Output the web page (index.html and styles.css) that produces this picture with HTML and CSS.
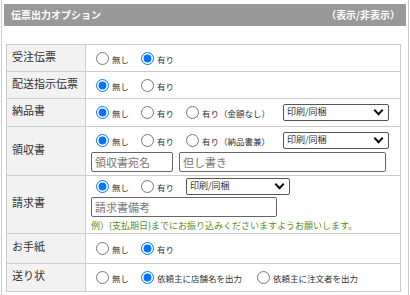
FILE: index.html
```html
<!DOCTYPE html>
<html lang="ja">
<head>
  <meta charset="UTF-8" />
  <title>伝票出力オプション</title>
  <link rel="stylesheet" href="styles.css">
</head>
<body>
  <div class="panel">
    <div class="panel-head">
      <span>伝票出力オプション</span>
      <span class="toggle">（表示/非表示）</span>
    </div>

    <table class="opts">
      <colgroup>
        <col class="col-label">
        <col>
      </colgroup>
      <tr class="r-27">
        <th>受注伝票</th>
        <td>
          <div class="line">
            <label class="opt"><input type="radio" name="juchu">無し</label>
            <label class="opt"><input type="radio" name="juchu" checked>有り</label>
          </div>
        </td>
      </tr>
      <tr class="r-27">
        <th>配送指示伝票</th>
        <td>
          <div class="line">
            <label class="opt"><input type="radio" name="haiso" checked>無し</label>
            <label class="opt"><input type="radio" name="haiso">有り</label>
          </div>
        </td>
      </tr>
      <tr class="r-28">
        <th>納品書</th>
        <td>
          <div class="line">
            <label class="opt"><input type="radio" name="nohin" checked>無し</label>
            <label class="opt"><input type="radio" name="nohin">有り</label>
            <label class="opt"><input type="radio" name="nohin">有り（金額なし）</label>
            <span class="select wide">印刷/同梱<i class="chev"></i></span>
          </div>
        </td>
      </tr>
      <tr class="r-49">
        <th>領収書</th>
        <td>
          <div class="line">
            <label class="opt"><input type="radio" name="ryoshu" checked>無し</label>
            <label class="opt"><input type="radio" name="ryoshu">有り</label>
            <label class="opt"><input type="radio" name="ryoshu">有り（納品書兼）</label>
            <span class="select wide">印刷/同梱<i class="chev"></i></span>
          </div>
          <div class="fields">
            <input class="text name" type="text" placeholder="領収書宛名">
            <input class="text memo" type="text" placeholder="但し書き">
          </div>
        </td>
      </tr>
      <tr class="r-58">
        <th>請求書</th>
        <td>
          <div class="line">
            <label class="opt"><input type="radio" name="seikyu" checked>無し</label>
            <label class="opt"><input type="radio" name="seikyu">有り</label>
            <span class="select">印刷/同梱<i class="chev"></i></span>
          </div>
          <div class="fields">
            <input class="text note" type="text" placeholder="請求書備考">
          </div>
          <p class="hint">例）{支払期日}までにお振り込みくださいますようお願いします。</p>
        </td>
      </tr>
      <tr class="r-30">
        <th>お手紙</th>
        <td>
          <div class="line">
            <label class="opt"><input type="radio" name="tegami">無し</label>
            <label class="opt"><input type="radio" name="tegami" checked>有り</label>
          </div>
        </td>
      </tr>
      <tr class="r-28">
        <th>送り状</th>
        <td>
          <div class="line">
            <label class="opt"><input type="radio" name="okuri">無し</label>
            <label class="opt wide-gap"><input type="radio" name="okuri" checked>依頼主に店舗名を出力</label>
            <label class="opt"><input type="radio" name="okuri">依頼主に注文者を出力</label>
          </div>
        </td>
      </tr>
    </table>
  </div>
</body>
</html>
```

FILE: styles.css
```css
:root {
  --line: #cccccc;
  --head: #999999;
  --label-bg: #f2f2f2;
  --text: #333333;
  --hint: #5a8f2e;
  --font: 'Noto Sans CJK JP', 'Noto Sans', sans-serif;
}

body {
  margin: 0;
  font-family: var(--font);
  color: var(--text);
  background: #ffffff;
  line-height: 1.2;
}

.panel {
  margin: 0 1px;
  height: 295px;
  box-sizing: border-box;
  border-left: 1px solid var(--line);
  border-right: 1px solid var(--line);
  padding: 4px 2px 0;
}

.panel-head {
  height: 22px;
  background: var(--head);
  color: #ffffff;
  font-size: 10px;
  font-weight: bold;
  display: flex;
  justify-content: space-between;
  align-items: center;
  padding: 0 6px 0 7px;
}

.opts {
  margin: 18px 0 0 2px;
  width: 395px;
  table-layout: fixed;
  border-collapse: collapse;
  font-size: 11px;
}

.col-label {
  width: 79px;
}

.opts th,
.opts td {
  border: 1px solid var(--line);
  padding: 0 5px;
  vertical-align: middle;
}

.opts th {
  background: var(--label-bg);
  font-weight: normal;
  text-align: left;
  padding-bottom: 3px;
}

.r-27 th { height: 23px; }
.r-28 th { height: 24px; }
.r-30 th { height: 26px; }
.r-49 th { height: 45px; }
.r-58 th { height: 54px; }

.line {
  display: flex;
  align-items: center;
  height: 20px;
}

.opt {
  display: flex;
  align-items: center;
  font-size: 8.5px;
  margin-right: 7px;
  white-space: nowrap;
  padding-top: 2px;
}

.opt.wide-gap {
  margin-right: 10px;
}

.opt input {
  width: 13px;
  height: 13px;
  margin: 0 3px 2px 5px;
}

.select {
  display: flex;
  align-items: center;
  justify-content: space-between;
  box-sizing: border-box;
  width: 104px;
  height: 17px;
  border: 1px solid #555555;
  border-radius: 2px;
  padding: 0 6px 0 3px;
  font-size: 9px;
  margin-left: 5px;
}

.select.wide {
  width: 106px;
  margin-left: 6px;
}

.chev {
  width: 5px;
  height: 5px;
  border-right: 2px solid #111111;
  border-bottom: 2px solid #111111;
  transform: rotate(45deg);
  margin-top: -4px;
}

.fields {
  display: flex;
  gap: 6px;
  margin-top: 1px;
}

.text {
  box-sizing: border-box;
  height: 20px;
  border: 1px solid #666666;
  border-radius: 2px;
  padding: 0 3px;
  font-family: var(--font);
  font-size: 11px;
  margin: 0;
}

.text::placeholder {
  color: #777777;
}

.text.name { width: 82px; }
.text.memo { width: 207px; }
.text.note { width: 186px; }

.hint {
  margin: 3px 0 2px;
  font-size: 9px;
  line-height: 11px;
  color: var(--hint);
}
```
